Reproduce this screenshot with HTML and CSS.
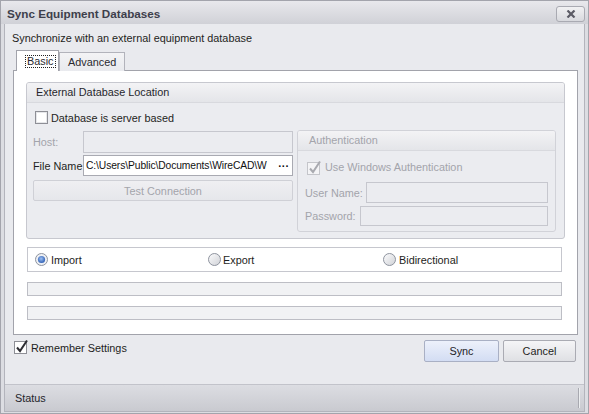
FILE: index.html
```html
<!DOCTYPE html>
<html>
<head>
<meta charset="utf-8">
<link rel="stylesheet" href="styles.css">
</head>
<body>
<div class="window">
  <div class="titlebar">
    <span class="title">Sync Equipment Databases</span>
    <div class="close">
      <svg width="10" height="8" viewBox="0 0 10 8"><path d="M1.5 0.5 L8.5 7.5 M8.5 0.5 L1.5 7.5" stroke="#5c5c66" stroke-width="2.2" fill="none"/></svg>
    </div>
  </div>
  <div class="client">
    <div class="content">
      <div class="intro">Synchronize with an external equipment database</div>
      <div class="tabs">
        <div class="tab active"><span class="focus">Basic</span></div>
        <div class="tab">Advanced</div>
      </div>
      <div class="panel">
        <div class="group ext">
          <div class="group-head">External Database Location</div>
          <div class="group-body ext-body">
            <div class="check">
              <svg class="box" width="13" height="13" viewBox="0 0 13 13"><rect x="0.5" y="0.5" width="12" height="12" fill="#fff" stroke="#8e8f96"/><rect x="1.5" y="1.5" width="10" height="10" fill="none" stroke="#e6e7ea"/></svg>
              <span>Database is server based</span>
            </div>
            <div class="cols">
              <div class="left">
                <div class="row"><span class="lbl dis">Host:</span><span class="input dis-input host"></span></div>
                <div class="row"><span class="lbl">File Name</span><span class="input file"><span class="path">C:\Users\Public\Documents\WireCAD\W</span><span class="dots">···</span></span></div>
                <div class="btn dis-btn">Test Connection</div>
              </div>
              <div class="group auth">
                <div class="group-head dis">Authentication</div>
                <div class="group-body auth-body">
                  <div class="check dis">
                    <svg class="box" width="15" height="15" viewBox="0 0 15 15"><rect x="0.5" y="2.5" width="12" height="12" fill="#f4f4f6" stroke="#c4c5ca"/><path d="M3 8.5 L6 12 L13 1.5" stroke="#a9aab0" stroke-width="2" fill="none"/></svg>
                    <span>Use Windows Authentication</span>
                  </div>
                  <div class="row"><span class="lbl dis ul">User Name:</span><span class="input dis-input uname"></span></div>
                  <div class="row"><span class="lbl dis ul">Password:</span><span class="input dis-input pword"></span></div>
                </div>
              </div>
            </div>
          </div>
        </div>
        <div class="radios">
          <div class="radio">
            <svg width="13" height="13" viewBox="0 0 13 13"><defs><radialGradient id="rg" cx="0.45" cy="0.4" r="0.6"><stop offset="0" stop-color="#9dc0f2"/><stop offset="1" stop-color="#2f5fb4"/></radialGradient></defs><circle cx="6.5" cy="6.5" r="6" fill="#eef0f4" stroke="#8e939e"/><circle cx="6.5" cy="6.5" r="3.6" fill="url(#rg)"/></svg>
            <span>Import</span>
          </div>
          <div class="radio">
            <svg width="13" height="13" viewBox="0 0 13 13"><defs><linearGradient id="rn" x1="0" y1="0" x2="1" y2="1"><stop offset="0" stop-color="#fdfdfe"/><stop offset="1" stop-color="#cfd1d6"/></linearGradient></defs><circle cx="6.5" cy="6.5" r="6" fill="url(#rn)" stroke="#8e939e"/></svg>
            <span>Export</span>
          </div>
          <div class="radio">
            <svg width="13" height="13" viewBox="0 0 13 13"><circle cx="6.5" cy="6.5" r="6" fill="url(#rn)" stroke="#8e939e"/></svg>
            <span>Bidirectional</span>
          </div>
        </div>
        <div class="progress"></div>
        <div class="progress"></div>
      </div>
      <div class="footer">
        <div class="check remember">
          <svg class="box" width="15" height="15" viewBox="0 0 15 15"><rect x="0.5" y="2.5" width="12" height="12" fill="#fff" stroke="#8e8f96"/><path d="M3 8.5 L6 12 L13 1.5" stroke="#2e2e34" stroke-width="2" fill="none"/></svg>
          <span>Remember Settings</span>
        </div>
        <div class="buttons">
          <div class="btn sync">Sync</div>
          <div class="btn cancel">Cancel</div>
        </div>
      </div>
    </div>
    <div class="statusbar"><span>Status</span><span class="grip"></span></div>
  </div>
</div>
</body>
</html>
```
FILE: styles.css
```css
* { box-sizing: border-box; }
html, body { margin: 0; padding: 0; }
body {
  width: 589px;
  height: 414px;
  font-family: "Liberation Sans", Arial, sans-serif;
  font-size: 10.85px;
  color: #1e1e22;
  background: #ffffff;
}
.window {
  width: 589px;
  height: 414px;
  border: 1px solid #a3a4ac;
  background: #dcdde2;
  display: flex;
  flex-direction: column;
}
.titlebar {
  height: 23px;
  flex: none;
  display: flex;
  align-items: center;
  justify-content: space-between;
  padding: 0 3px 0 6px;
  background: linear-gradient(#e8e8ec, #d0d1d7);
}
.title {
  font-weight: bold;
  font-size: 11.7px;
  color: #3e3f4c;
  margin-top: 1px;
}
.close {
  width: 29px;
  height: 16px;
  border: 1px solid #a9aab2;
  border-radius: 3px;
  background: linear-gradient(#f1f1f3, #d8d9de);
  display: flex;
  align-items: center;
  justify-content: center;
  margin-top: 2px;
}
.client {
  flex: 1;
  margin: 0 3px 1px 3px;
  border: 1px solid #b3b4bc;
  border-top: none;
  display: flex;
  flex-direction: column;
  background: #e9eaee;
}
.content {
  flex: 1;
  padding: 7px 8px 0 0;
  display: flex;
  flex-direction: column;
}
.intro {
  padding-left: 7px;
  line-height: 14px;
  height: 14px;
}
.tabs {
  display: flex;
  align-items: flex-end;
  margin: 5px 0 -1px 11px;
  position: relative;
  z-index: 1;
}
.tab {
  height: 19px;
  padding: 0 8px;
  border: 1px solid #b2b3bb;
  border-bottom: none;
  background: linear-gradient(#f3f3f5, #e9eaee);
  display: flex;
  align-items: center;
  color: #2a2a30;
}
.tab.active {
  height: 21px;
  width: 43px;
  padding: 0 0 0 8px;
  background: #ffffff;
  border-color: #a2a3ab;
  align-items: flex-start;
  padding-top: 4px;
}
.focus {
  border: 1px dotted #222;
  padding: 0 1px;
  line-height: 11px;
}
.panel {
  margin-left: 8px;
  width: 565px;
  height: 265px;
  border: 1px solid #a2a3ab;
  background: #ffffff;
  padding: 11px 0 0 12px;
}
.group {
  border: 1px solid #c7c8cf;
  border-radius: 3px;
  background: #ebecf0;
  overflow: hidden;
}
.group-head {
  height: 20px;
  line-height: 19px;
  padding-left: 9px;
  background: linear-gradient(#f3f3f5, #e4e5e9);
  border-bottom: 1px solid #d8d9de;
  color: #26262c;
}
.group-head.dis { color: #a3a4ab; padding-left: 11px; }
.ext {
  width: 539px;
  height: 157px;
}
.ext-body {
  padding: 8px 0 0 6px;
}
.check {
  display: flex;
  align-items: center;
  height: 13px;
  margin-left: 2px;
  white-space: nowrap;
}
.check .box { margin-right: 3px; flex: none; }
.check.dis { color: #a3a4ab; }
.cols {
  display: flex;
  align-items: flex-start;
  margin-top: 7px;
}
.left {
  width: 260px;
  flex: none;
  display: flex;
  flex-direction: column;
}
.row {
  display: flex;
  align-items: center;
  justify-content: space-between;
  height: 21px;
  margin-bottom: 3px;
}
.left .row:first-child { height: 22px; margin-bottom: 2px; }
.lbl { color: #1e1e22; white-space: nowrap; flex: none; }
.lbl.dis { color: #a3a4ab; }
.input {
  height: 100%;
  flex: none;
  border: 1px solid #c6c7ce;
  background: #ebecf0;
}
.host { width: 210px; }
.file {
  width: 210px;
  background: #ffffff;
  border-color: #a9aab2;
  display: flex;
  align-items: center;
  justify-content: space-between;
  padding: 0 3px 0 2px;
  color: #111;
  white-space: nowrap;
  overflow: hidden;
}
.path {
  font-size: 10.3px;
  letter-spacing: -0.1px;
}
.dots { flex: none; font-weight: bold; margin-left: 2px; }
.btn {
  height: 21px;
  border: 1px solid #b0b1b9;
  border-radius: 2px;
  display: flex;
  align-items: center;
  justify-content: center;
  background: linear-gradient(#f6f6f8, #e2e3e7);
}
.dis-btn {
  margin-top: 1px;
  color: #a3a4ab;
  border-color: #cfd0d6;
  background: linear-gradient(#efeff2, #e6e7eb);
}
.auth {
  margin-left: 4px;
  margin-top: -1px;
  width: 259px;
  height: 102px;
  flex: none;
  border-color: #d1d2d8;
}
.auth-body {
  padding: 9px 7px 0 7px;
}
.auth .check { margin: 0 0 8px 2px; height: 14px; }
.auth .row { margin-bottom: 3px; height: 21px; }
.auth .row:last-child { height: 20px; }
.uname { width: 182px; }
.pword { width: 188px; }
.radios {
  margin-top: 8px;
  margin-left: 1px;
  width: 535px;
  height: 25px;
  border: 1px solid #c6c7ce;
  display: grid;
  grid-template-columns: 173px 175px 1fr;
  align-items: center;
  padding-left: 7px;
}
.radio {
  display: flex;
  align-items: center;
}
.radio svg { margin-right: 3px; flex: none; }
.radio:nth-child(2) svg { margin-right: 2px; }
.radio:nth-child(3) svg { margin-right: 3px; }
.progress {
  margin-top: 10px;
  margin-left: 1px;
  width: 535px;
  height: 14px;
  border: 1px solid #bdbec5;
  background: #f1f2f4;
}
.footer {
  display: flex;
  justify-content: space-between;
  align-items: flex-start;
  padding: 5px 0 0 9px;
}
.remember { margin-top: 1px; margin-left: 0; }
.remember .box { margin-top: -2px; margin-right: 2px; }
.buttons {
  display: flex;
  gap: 4px;
}
.sync {
  width: 75px;
  height: 22px;
  border-color: #a9b0c4;
  background: linear-gradient(#edf1fb, #d3ddf3);
  color: #1e1e28;
}
.cancel {
  width: 73px;
  height: 22px;
  border-color: #aaabb3;
  background: linear-gradient(#f5f5f7, #dfe0e4);
}
.statusbar {
  height: 27px;
  flex: none;
  border-top: 1px solid #c2c3ca;
  background: linear-gradient(#dcdde2, #c9cad0);
  display: flex;
  align-items: center;
  justify-content: space-between;
  padding: 0 4px 1px 10px;
  color: #25252c;
}
.grip {
  width: 1px;
  height: 20px;
  background: #a8a9b0;
  border-right: 1px solid #eceef0;
  box-sizing: content-box;
}
```
